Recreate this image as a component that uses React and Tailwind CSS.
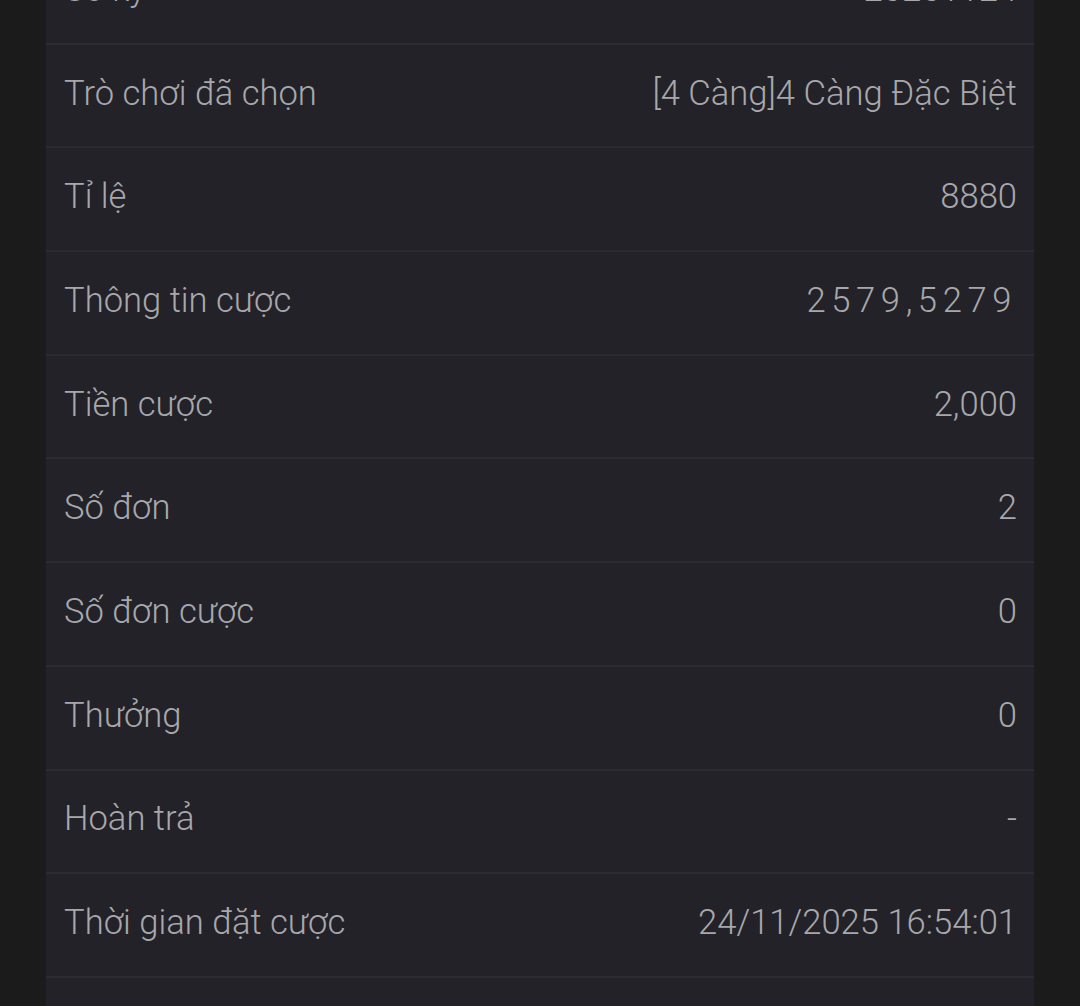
const rows = [
  { label: 'Số kỳ', value: '20251124' },
  { label: 'Trò chơi đã chọn', value: '[4 Càng]4 Càng Đặc Biệt' },
  { label: 'Tỉ lệ', value: '8880' },
  { label: 'Thông tin cược', value: '2579,5279', spaced: true },
  { label: 'Tiền cược', value: '2,000' },
  { label: 'Số đơn', value: '2' },
  { label: 'Số đơn cược', value: '0' },
  { label: 'Thưởng', value: '0' },
  { label: 'Hoàn trả', value: '-' },
  { label: 'Thời gian đặt cược', value: '24/11/2025 16:54:01' },
  { label: '', value: '' },
];

export default function App() {
  return (
    <div className="w-full h-[1006px] overflow-hidden bg-[#1b1b1c] font-['Roboto',sans-serif]">
      <div className="mx-[46px] -mt-[59px] bg-[#222228]">
        {rows.map((row, i) => (
          <div
            key={i}
            className="h-[103.7px] flex items-center justify-between pl-[18px] pr-[17px] pb-[4px] border-b-2 border-[#2b2b32] text-[34.6px] font-light text-[#a8a8ac]"
          >
            <span>{row.label}</span>
            <span className={row.spaced ? 'tracking-[5.6px]' : ''}>{row.value}</span>
          </div>
        ))}
      </div>
    </div>
  );
}
